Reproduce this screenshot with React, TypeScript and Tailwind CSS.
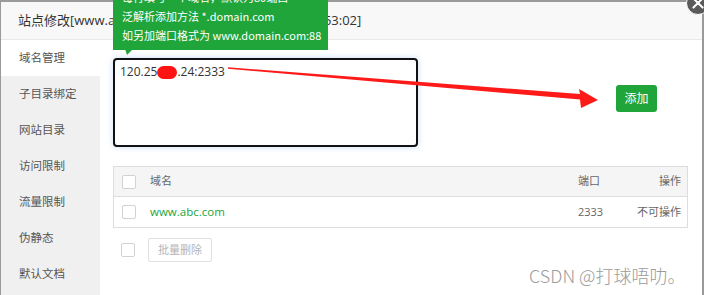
import React from "react";

const font = "font-['Open_Sans','Noto_Sans_CJK_SC',sans-serif]";

function Box() {
  return <span className="block w-[14px] h-[14px] border border-[#d2d2d2] bg-white rounded-[2px] shrink-0" />;
}

export default function App() {
  const menu = ["域名管理", "子目录绑定", "网站目录", "访问限制", "流量限制", "伪静态", "默认文档"];
  return (
    <div className={`relative w-[704px] h-[295px] overflow-hidden bg-white ${font}`}>
      <div className="flex flex-col w-[704px] h-[295px] border-t-2 border-l border-r-2 border-[#9a9a9a]">
        {/* header */}
        <div className="h-[38px] shrink-0 bg-[#f8f8f8] border-b border-[#e8e8e8] flex items-center pl-[17px] text-[13px] text-[#333] whitespace-nowrap">
          站点修改[www.abc.com] -- 添加时间[2021-12-05 14:53:02]
        </div>
        {/* body */}
        <div className="flex flex-1">
          <div className="w-[99px] shrink-0 bg-[#f0f0f0] flex flex-col">
            {menu.map((m, i) => (
              <div
                key={m}
                className={`h-[36px] flex items-center pl-[18px] text-[11.5px] text-[#555] ${i === 0 ? "bg-white" : ""}`}
              >
                {m}
              </div>
            ))}
          </div>
          <div className="flex-1 flex flex-col pl-[13px] pt-[18px]">
            <div className="flex items-start">
              <div className="w-[305px] h-[89px] border-2 border-[#111] rounded-[4px] shadow-[0_0_6px_rgba(100,160,230,0.35)] px-[5px] pt-[3px] text-[12px] text-[#333] flex items-start">
                <span>120.25</span>
                <span className="inline-block w-[20px] h-[13px] mt-[3px] bg-[#ff1414] rounded-full" />
                <span>.24:2333</span>
              </div>
              <button className="ml-[198px] mt-[27px] w-[41px] h-[27px] bg-[#20a53a] rounded-[3px] text-white text-[12px] flex items-center justify-center">
                添加
              </button>
            </div>
            {/* table */}
            <div className="mt-[19px] w-[575px] border border-[#dddddd] text-[11px]">
              <div className="h-[30px] bg-[#f5f5f5] flex items-center border-b border-[#dddddd] text-[#666]">
                <div className="pl-[8px] w-[36px]"><Box /></div>
                <div className="flex-1">域名</div>
                <div className="w-[43px]">端口</div>
                <div className="w-[60px] text-right mr-[6px]">操作</div>
              </div>
              <div className="h-[30px] flex items-center text-[#666]">
                <div className="pl-[8px] w-[36px]"><Box /></div>
                <div className="flex-1 text-[#20a53a] text-[11.5px]">www.abc.com</div>
                <div className="w-[43px]">2333</div>
                <div className="w-[60px] text-right mr-[6px]">不可操作</div>
              </div>
            </div>
            <div className="mt-[10px] flex items-center">
              <div className="pl-[8px] w-[35px]"><Box /></div>
              <button className="w-[64px] h-[24px] border border-[#e0e0e0] rounded-[2px] text-[11px] text-[#b5b5b5] bg-white">
                批量删除
              </button>
            </div>
          </div>
        </div>
      </div>

      {/* tooltip */}
      <div className="absolute left-[113px] top-[-17px] w-[215px] bg-[#20a53a] text-white text-[11px] leading-[19px] px-[9px] py-[5px] whitespace-nowrap font-['Noto_Sans_CJK_SC',sans-serif]">
        <div>每行填写一个域名，默认为80端口</div>
        <div>泛解析添加方法 *.domain.com</div>
        <div>如另加端口格式为 www.domain.com:88</div>
      </div>

      {/* close button */}
      <div className="absolute left-[686px] top-[-9px] w-[24px] h-[24px] rounded-full bg-[#5a5a5a] border border-white flex items-center justify-center">
        <svg width="24" height="24" viewBox="0 0 24 24">
          <path d="M7 7 L17 17 M17 7 L7 17" stroke="white" strokeWidth="2.2" strokeLinecap="round" />
        </svg>
      </div>

      {/* annotation: tooltip arrow and red arrow */}
      <svg className="absolute left-0 top-0 pointer-events-none" width="704" height="295">
        <polygon points="125,49 133,49 127,55" fill="#20a53a" />
        <polygon points="228,67.3 580,94 579,89 598,100 581,108 580,99.5 228,68.7" fill="#ff1a1a" />
      </svg>

      {/* watermark */}
      <div className="absolute left-[529px] top-[262px] text-[18px] text-[#9c9c9c] font-['Noto_Sans_CJK_SC',sans-serif] font-light whitespace-nowrap">
        CSDN @打球唔叻。
      </div>
    </div>
  );
}
